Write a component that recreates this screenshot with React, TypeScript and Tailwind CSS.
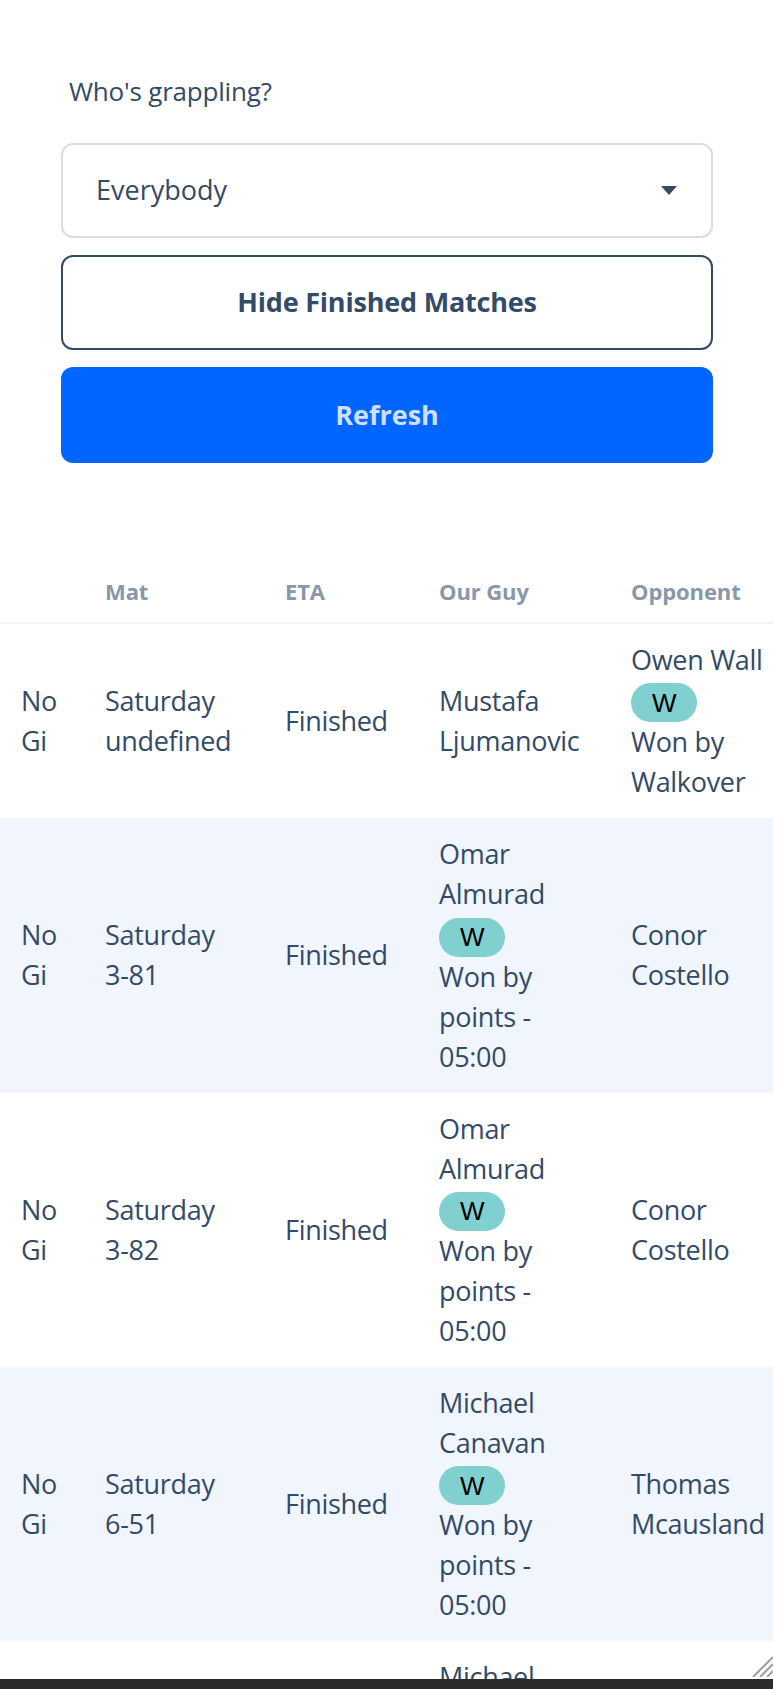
import React from 'react';

type Match = {
  type: string[];
  mat: string[];
  eta: string;
  ourGuy: string[];
  ourWin?: string[];
  opponent: string[];
  oppWin?: string[];
};

const matches: Match[] = [
  {
    type: ['No', 'Gi'],
    mat: ['Saturday', 'undefined'],
    eta: 'Finished',
    ourGuy: ['Mustafa', 'Ljumanovic'],
    opponent: ['Owen Wall'],
    oppWin: ['Won by', 'Walkover'],
  },
  {
    type: ['No', 'Gi'],
    mat: ['Saturday', '3-81'],
    eta: 'Finished',
    ourGuy: ['Omar', 'Almurad'],
    ourWin: ['Won by', 'points -', '05:00'],
    opponent: ['Conor', 'Costello'],
  },
  {
    type: ['No', 'Gi'],
    mat: ['Saturday', '3-82'],
    eta: 'Finished',
    ourGuy: ['Omar', 'Almurad'],
    ourWin: ['Won by', 'points -', '05:00'],
    opponent: ['Conor', 'Costello'],
  },
  {
    type: ['No', 'Gi'],
    mat: ['Saturday', '6-51'],
    eta: 'Finished',
    ourGuy: ['Michael', 'Canavan'],
    ourWin: ['Won by', 'points -', '05:00'],
    opponent: ['Thomas', 'Mcausland'],
  },
  {
    type: ['No', 'Gi'],
    mat: ['Saturday', '6-52'],
    eta: 'Finished',
    ourGuy: ['Michael', 'Canavan'],
    ourWin: ['Won by', 'points -', '05:00'],
    opponent: ['Thomas', 'Mcausland'],
  },
];

const Lines: React.FC<{ lines: string[] }> = ({ lines }) => (
  <>
    {lines.map((l, i) => (
      <div key={i}>{l}</div>
    ))}
  </>
);

const WinBadge: React.FC = () => (
  <div>
    <span className="inline-flex items-center justify-center w-[66px] h-[39px] align-middle rounded-full bg-[#81d0d0] text-black text-[26px] font-['Liberation_Sans',sans-serif]">
      W
    </span>
  </div>
);

const Person: React.FC<{ name: string[]; win?: string[] }> = ({ name, win }) => (
  <div>
    <Lines lines={name} />
    {win && (
      <>
        <WinBadge />
        <Lines lines={win} />
      </>
    )}
  </div>
);

export default function App() {
  return (
    <div className="h-[1689px] w-[773px] flex flex-col overflow-hidden bg-white text-[#334a68] font-['Open_Sans',sans-serif]">
      <div className="relative flex-1 overflow-hidden">
        <div className="pl-[61px] pr-[60px] pt-[73px]">
          <p className="pl-[8px] text-[26px] leading-[36px] tracking-[-0.2px]">Who's grappling?</p>

          <div className="mt-[34px] h-[95px] rounded-[12px] border-2 border-[#dadde2] flex items-center justify-between pl-[33px] pr-[34px]">
            <span className="text-[27px]">Everybody</span>
            <svg width="16" height="9" viewBox="0 0 16 9" className="text-[#334a68]">
              <path d="M0 0h16L8 9z" fill="currentColor" />
            </svg>
          </div>

          <button className="mt-[17px] w-full h-[95px] rounded-[12px] border-2 border-[#334a68] text-[27px] font-bold tracking-[-0.2px]">
            Hide Finished Matches
          </button>

          <button className="mt-[17px] w-full h-[96px] rounded-[12px] bg-[#0066ff] text-[#cfe0ff] text-[27px] font-bold">
            Refresh
          </button>
        </div>

        <table className="mt-[100px] table-fixed w-[800px] border-collapse text-[27px] leading-[40px] tracking-[-0.3px]">
          <colgroup>
            <col className="w-[84px]" />
            <col className="w-[180px]" />
            <col className="w-[154px]" />
            <col className="w-[192px]" />
            <col className="w-[190px]" />
          </colgroup>
          <thead>
            <tr className="border-b-2 border-[#f1f4f9]">
              <th className="h-[60px]" />
              {['Mat', 'ETA', 'Our Guy', 'Opponent'].map(h => (
                <th key={h} className="pl-[21px] pb-[3px] text-left align-middle text-[22px] font-bold text-[#8a96a9] tracking-[-0.1px]">
                  {h}
                </th>
              ))}
            </tr>
          </thead>
          <tbody>
            {matches.map((m, i) => (
              <tr key={i} className={i % 2 === 1 ? 'bg-[#f0f5fe]' : 'bg-white'}>
                <td className="pl-[21px] py-4 align-middle">
                  <Lines lines={m.type} />
                </td>
                <td className="pl-[21px] py-4 align-middle">
                  <Lines lines={m.mat} />
                </td>
                <td className="pl-[21px] py-4 align-middle">{m.eta}</td>
                <td className="pl-[21px] py-4 align-middle">
                  <Person name={m.ourGuy} win={m.ourWin} />
                </td>
                <td className="pl-[21px] py-4 align-middle whitespace-nowrap">
                  <Person name={m.opponent} win={m.oppWin} />
                </td>
              </tr>
            ))}
          </tbody>
        </table>

        <svg width="24" height="24" viewBox="0 0 24 24" className="absolute right-0 bottom-[2px] text-[#a0a0a0]">
          <path d="M24 4L4 24M24 11L11 24M24 18L18 24" stroke="currentColor" strokeWidth="2" />
        </svg>
      </div>

      <div className="h-[10px] bg-[#2b2b2b]" />
    </div>
  );
}
